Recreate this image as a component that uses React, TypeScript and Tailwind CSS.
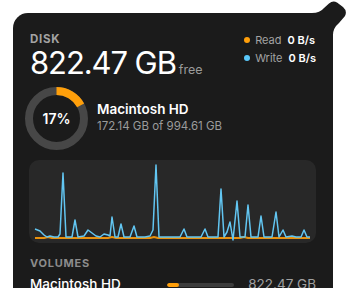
import React from 'react';

const writePts =
  '35,229 40,231 44,235 47,237 50,236 54,237 58,237 60,234 63,173 66,237 72,237 75,220 78,237 84,236 88,230 92,233 96,236 100,237 104,234 108,235 110,236 112,217 115,237 118,237 121,224 124,237 130,237 134,226 137,237 145,237 150,236 153,230 156,165 159,237 180,237 184,229 187,237 201,237 205,229 208,237 218,237 221,189 224,237 227,232 230,222 233,240 237,201 240,237 245,237 248,205 251,237 258,237 261,216 264,237 272,237 276,212 279,237 283,230 286,237 292,236 296,237 301,237 304,230 307,237 310,237';

const readPts =
  '35,238 44,238 48,237 52,238 108,238 112,237 116,238 150,238 154,237 158,238 240,238 244,237 248,238 310,238';

function UsageRing({ percent }: { percent: number }) {
  const r = 27.5;
  const c = 2 * Math.PI * r;
  return (
    <div className="relative w-[63px] h-[63px] shrink-0 -ml-[5px]">
      <svg width="63" height="63" viewBox="0 0 63 63" className="-rotate-90">
        <circle cx="31.5" cy="31.5" r={r} fill="none" stroke="#474747" strokeWidth="8" />
        <circle
          cx="31.5"
          cy="31.5"
          r={r}
          fill="none"
          stroke="#ff9f0a"
          strokeWidth="8"
          strokeDasharray={`${(c * percent) / 100} ${c}`}
        />
      </svg>
      <div className="absolute inset-0 flex items-center justify-center text-[14px] font-semibold text-white">
        {percent}%
      </div>
    </div>
  );
}

export default function App() {
  return (
    <div className="w-[346px] h-[288px] bg-white overflow-hidden pl-[13px] pt-[13px] relative font-['Inter',sans-serif]">
      {/* popover arrow tab */}
      <svg className="absolute left-0 top-0" width="346" height="40" viewBox="0 0 346 40">
        <path
          d="M312 13 Q320 13 324 8 L329 3.5 Q333 0 337 2.5 L343 7 Q347.5 11 345 16 L339 23 Q333 28 333 35 L333 13 Z"
          fill="#1b1b1b"
        />
      </svg>

      <div className="w-[320px] h-[300px] bg-[#1b1b1b] rounded-tl-[15px] px-[17px] pt-[19px]">
        {/* header */}
        <div className="flex justify-between">
          <div>
            <div className="text-[11.5px] font-bold tracking-[0.06em] text-[#a3a3a3] leading-[14px]">DISK</div>
            <div className="flex items-baseline mt-[1px]">
              <span className="text-[31px] font-normal text-white tracking-[-0.035em] leading-[31px]">822.47 GB</span>
              <span className="text-[12.5px] text-[#9a9a9a] ml-[3px] leading-[14px]">free</span>
            </div>
          </div>
          <div className="flex flex-col gap-[4px] pt-[1px] text-[11px] leading-[14px]">
            <div className="flex items-center">
              <span className="w-[6px] h-[6px] rounded-full bg-[#ff9f0a] mr-[5px]" />
              <span className="text-[#a3a3a3] mr-[6px]">Read</span>
              <span className="text-white font-semibold">0 B/s</span>
            </div>
            <div className="flex items-center">
              <span className="w-[6px] h-[6px] rounded-full bg-[#5ac8fa] mr-[5px]" />
              <span className="text-[#a3a3a3] mr-[6px]">Write</span>
              <span className="text-white font-semibold">0 B/s</span>
            </div>
          </div>
        </div>

        {/* usage ring */}
        <div className="flex items-center mt-[9px] gap-[9px]">
          <UsageRing percent={17} />
          <div className="pb-[2px]">
            <div className="text-[13.5px] font-semibold text-white leading-[17px]">Macintosh HD</div>
            <div className="text-[11.5px] text-[#9b9b9b] leading-[15px] mt-[1px]">172.14 GB of 994.61 GB</div>
          </div>
        </div>

        {/* activity chart */}
        <div className="mt-[10px] -ml-[1px] w-[287px] h-[83px] bg-[#282828] rounded-[10px] overflow-hidden">
          <svg width="287" height="83" viewBox="29 160 287 83">
            <polyline points={readPts} fill="none" stroke="#e8900c" strokeWidth="2" strokeLinejoin="round" />
            <polyline points={writePts} fill="none" stroke="#62c6f2" strokeWidth="1.5" strokeLinejoin="round" />
          </svg>
        </div>

        {/* volumes */}
        <div className="mt-[13px] text-[11px] font-bold tracking-[0.07em] text-[#8c8c8c] leading-[14px]">VOLUMES</div>
        <div className="flex items-center mt-[6px] leading-[17px]">
          <span className="text-[13.5px] font-medium text-white w-[137px]">Macintosh HD</span>
          <div className="w-[67px] h-[4px] rounded-full bg-[#3c3c3c] overflow-hidden">
            <div className="h-full w-[12px] bg-[#ff9f0a] rounded-full" />
          </div>
          <span className="ml-auto text-[13.5px] text-[#a0a0a0]">822.47 GB</span>
        </div>
      </div>
    </div>
  );
}
